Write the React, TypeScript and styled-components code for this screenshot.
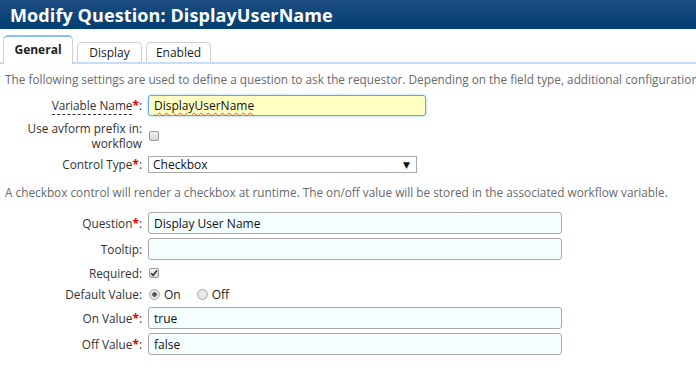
import React from "react";
import styled, { createGlobalStyle } from "styled-components";

const GlobalStyle = createGlobalStyle`
  html, body {
    margin: 0;
    padding: 0;
    background: #ffffff;
  }
  body {
    font-family: "Open Sans", "DejaVu Sans", sans-serif;
    font-size: 11.8px;
    color: #333333;
  }
`;

const Page = styled.div`
  width: 696px;
  height: 382px;
  overflow: hidden;
  background: #ffffff;
`;

const TitleBar = styled.div`
  height: 29px;
  background: linear-gradient(#1d4c82, #003f73);
  display: flex;
  align-items: center;
  padding-left: 10px;
  color: #ffffff;
  font-weight: 700;
  font-size: 18px;
  letter-spacing: 0.1px;
`;

const TabStrip = styled.div`
  height: 31px;
  padding: 2px 0 0 3px;
  display: flex;
  align-items: flex-end;
  gap: 4px;
  border-bottom: 2px solid #c8ddf6;
`;

const Tab = styled.div<{ $active?: boolean }>`
  height: ${({ $active }) => ($active ? "29px" : "20px")};
  width: ${({ $active }) => ($active ? "70px" : "65px")};
  box-sizing: border-box;
  margin-bottom: ${({ $active }) => ($active ? "-2px" : "0")};
  display: flex;
  align-items: center;
  justify-content: center;
  background: #ffffff;
  border: 1px solid #cfcfcf;
  border-bottom: none;
  border-top: ${({ $active }) => ($active ? "2px solid #8cc0ee" : "1px solid #cfcfcf")};
  border-radius: 5px 5px 0 0;
  font-weight: ${({ $active }) => ($active ? 700 : 400)};
  font-size: 12px;
  color: #222222;
  padding-bottom: ${({ $active }) => ($active ? "2px" : "0")};
`;

const Intro = styled.p<{ $top: number }>`
  margin: ${({ $top }) => $top}px 0 0 5px;
  line-height: 16px;
  color: #6a6a6a;
  white-space: nowrap;
`;

const Form = styled.div<{ $top: number; $gap: number }>`
  margin-top: ${({ $top }) => $top}px;
  display: flex;
  flex-direction: column;
  gap: ${({ $gap }) => $gap}px;
`;

const Row = styled.div<{ $height?: number }>`
  display: flex;
  align-items: center;
  min-height: ${({ $height }) => ($height ? `${$height}px` : "auto")};
`;

const Label = styled.div`
  width: 148px;
  flex: none;
  text-align: right;
  line-height: 15px;
  color: #333333;
  padding-right: 6px;
  box-sizing: border-box;
`;

const Hint = styled.span`
  border-bottom: 1px dashed #333333;
  padding-bottom: 1px;
`;

const Req = styled.span`
  color: #e00000;
  font-weight: 700;
`;

const Field = styled.div<{ $width: number; $focused?: boolean }>`
  width: ${({ $width }) => $width}px;
  height: ${({ $focused }) => ($focused ? "21px" : "22px")};
  box-sizing: border-box;
  display: flex;
  align-items: center;
  padding-left: 5px;
  font-size: 12px;
  color: #111111;
  border: 1px solid ${({ $focused }) => ($focused ? "#62a9ea" : "#a9a9a9")};
  border-radius: 3px;
  background: ${({ $focused }) => ($focused ? "#ffffc2" : "#f4feff")};
  box-shadow: ${({ $focused }) => ($focused ? "0 0 3px #9cccf6" : "none")};
`;

const Misspelt = styled.span`
  text-decoration: underline wavy #e25050;
  text-decoration-thickness: 1px;
  text-underline-offset: 2px;
`;

const Select = styled.div`
  width: 269px;
  height: 17px;
  box-sizing: border-box;
  display: flex;
  align-items: center;
  justify-content: space-between;
  padding: 0 6px 0 4px;
  font-size: 12px;
  color: #111111;
  border: 1px solid #a9a9a9;
  background: #ffffff;
`;

const Arrow = styled.span`
  font-size: 9px;
  color: #111111;
`;

const Box = styled.span`
  width: 10px;
  height: 10px;
  margin-left: 1px;
  box-sizing: border-box;
  border: 1px solid #9a9a9a;
  border-radius: 2px;
  background: linear-gradient(#f2f2f2, #d8d8d8);
  display: inline-flex;
  align-items: center;
  justify-content: center;
`;

const RadioGroup = styled.div`
  display: flex;
  align-items: center;
  gap: 4px;
  font-size: 12px;
  color: #222222;
`;

const Radio = styled.span<{ $checked?: boolean }>`
  width: 11px;
  height: 11px;
  box-sizing: border-box;
  border-radius: 50%;
  border: 1px solid #aaaaaa;
  background: radial-gradient(circle, ${({ $checked }) => ($checked ? "#555555 0 2px, #e6e6e6 2.5px" : "#f0f0f0 0, #dcdcdc 100%")});
  margin-left: ${({ $checked }) => ($checked ? "1px" : "12px")};
`;

const Tick = () => (
  <svg width="8" height="8" viewBox="0 0 8 8">
    <path d="M1 4.2 L3 6.2 L7 1.5" fill="none" stroke="#333" strokeWidth="1.6" />
  </svg>
);

export default function App() {
  return (
    <Page>
      <GlobalStyle />
      <TitleBar>Modify Question: DisplayUserName</TitleBar>
      <TabStrip>
        <Tab $active>General</Tab>
        <Tab>Display</Tab>
        <Tab>Enabled</Tab>
      </TabStrip>
      <Intro $top={7}>
        The following settings are used to define a question to ask the requestor. Depending on the field type, additional configuration options are shown.
      </Intro>
      <Form $top={8} $gap={5}>
        <Row>
          <Label>
            <Hint>Variable Name</Hint>
            <Req>*</Req>:
          </Label>
          <Field $width={278} $focused>
            <Misspelt>DisplayUserName</Misspelt>
          </Field>
        </Row>
        <Row>
          <Label>
            Use avform prefix in:
            <br />
            workflow
          </Label>
          <Box />
        </Row>
        <Row>
          <Label>
            Control Type<Req>*</Req>:
          </Label>
          <Select>
            Checkbox
            <Arrow>▼</Arrow>
          </Select>
        </Row>
      </Form>
      <Intro $top={11}>
        A checkbox control will render a checkbox at runtime. The on/off value will be stored in the associated workflow variable.
      </Intro>
      <Form $top={12} $gap={4}>
        <Row>
          <Label>
            Question<Req>*</Req>:
          </Label>
          <Field $width={414}>Display User Name</Field>
        </Row>
        <Row>
          <Label>Tooltip:</Label>
          <Field $width={414} />
        </Row>
        <Row $height={18}>
          <Label>Required:</Label>
          <Box>
            <Tick />
          </Box>
        </Row>
        <Row $height={17}>
          <Label>Default Value:</Label>
          <RadioGroup>
            <Radio $checked />
            <span>On</span>
            <Radio />
            <span>Off</span>
          </RadioGroup>
        </Row>
        <Row>
          <Label>
            On Value<Req>*</Req>:
          </Label>
          <Field $width={414}>true</Field>
        </Row>
        <Row>
          <Label>
            Off Value<Req>*</Req>:
          </Label>
          <Field $width={414}>false</Field>
        </Row>
      </Form>
    </Page>
  );
}
